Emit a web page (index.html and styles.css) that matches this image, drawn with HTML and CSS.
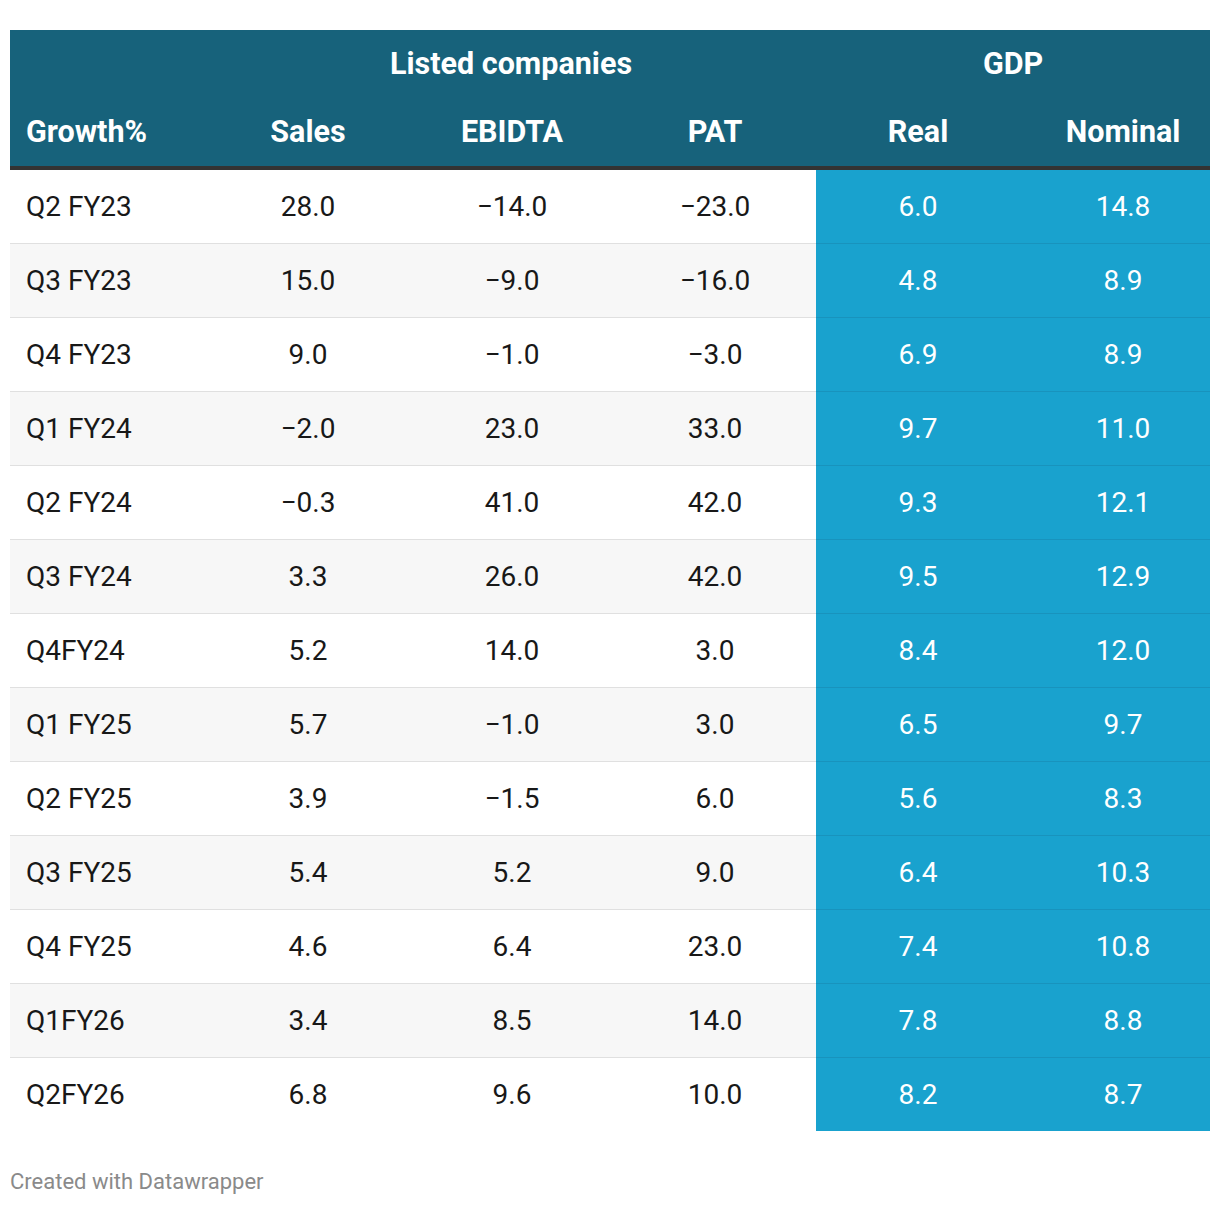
FILE: index.html
```html
<!DOCTYPE html>
<html>
<head>
<meta charset="utf-8">
<link rel="stylesheet" href="styles.css">
</head>
<body>
<div class="chart">
  <table class="dw-table">
    <colgroup>
      <col class="c1"><col class="c2"><col class="c3"><col class="c4"><col class="c5"><col class="c6">
    </colgroup>
    <thead>
      <tr class="group-row">
        <th></th>
        <th colspan="3" class="center">Listed companies</th>
        <th colspan="2" class="center">GDP</th>
      </tr>
      <tr class="head-row">
        <th class="left">Growth%</th>
        <th class="center">Sales</th>
        <th class="center">EBIDTA</th>
        <th class="center">PAT</th>
        <th class="center">Real</th>
        <th class="center last">Nominal</th>
      </tr>
    </thead>
    <tbody>
      <tr><td class="left">Q2 FY23</td><td>28.0</td><td>−14.0</td><td>−23.0</td><td class="hl">6.0</td><td class="hl last">14.8</td></tr>
      <tr><td class="left">Q3 FY23</td><td>15.0</td><td>−9.0</td><td>−16.0</td><td class="hl">4.8</td><td class="hl last">8.9</td></tr>
      <tr><td class="left">Q4 FY23</td><td>9.0</td><td>−1.0</td><td>−3.0</td><td class="hl">6.9</td><td class="hl last">8.9</td></tr>
      <tr><td class="left">Q1 FY24</td><td>−2.0</td><td>23.0</td><td>33.0</td><td class="hl">9.7</td><td class="hl last">11.0</td></tr>
      <tr><td class="left">Q2 FY24</td><td>−0.3</td><td>41.0</td><td>42.0</td><td class="hl">9.3</td><td class="hl last">12.1</td></tr>
      <tr><td class="left">Q3 FY24</td><td>3.3</td><td>26.0</td><td>42.0</td><td class="hl">9.5</td><td class="hl last">12.9</td></tr>
      <tr><td class="left">Q4FY24</td><td>5.2</td><td>14.0</td><td>3.0</td><td class="hl">8.4</td><td class="hl last">12.0</td></tr>
      <tr><td class="left">Q1 FY25</td><td>5.7</td><td>−1.0</td><td>3.0</td><td class="hl">6.5</td><td class="hl last">9.7</td></tr>
      <tr><td class="left">Q2 FY25</td><td>3.9</td><td>−1.5</td><td>6.0</td><td class="hl">5.6</td><td class="hl last">8.3</td></tr>
      <tr><td class="left">Q3 FY25</td><td>5.4</td><td>5.2</td><td>9.0</td><td class="hl">6.4</td><td class="hl last">10.3</td></tr>
      <tr><td class="left">Q4 FY25</td><td>4.6</td><td>6.4</td><td>23.0</td><td class="hl">7.4</td><td class="hl last">10.8</td></tr>
      <tr><td class="left">Q1FY26</td><td>3.4</td><td>8.5</td><td>14.0</td><td class="hl">7.8</td><td class="hl last">8.8</td></tr>
      <tr><td class="left">Q2FY26</td><td>6.8</td><td>9.6</td><td>10.0</td><td class="hl">8.2</td><td class="hl last">8.7</td></tr>
    </tbody>
  </table>
  <div class="footer">Created with Datawrapper</div>
</div>
</body>
</html>
```

FILE: styles.css
```css
html, body {
  margin: 0;
  padding: 0;
  background: #ffffff;
}
body {
  font-family: Roboto, "Liberation Sans", sans-serif;
  color: #181818;
}
.chart {
  padding: 30px 10px 0 10px;
}
.dw-table {
  width: 1200px;
  border-collapse: collapse;
  table-layout: fixed;
}
.c1 { width: 196px; }
.c2 { width: 204px; }
.c3 { width: 204px; }
.c4 { width: 202px; }
.c5 { width: 204px; }
.c6 { width: 190px; }

thead th {
  background: #17627b;
  color: #ffffff;
  font-weight: 700;
  font-size: 30.5px;
  padding: 0;
}
.group-row th {
  height: 67px;
  vertical-align: middle;
}
.head-row th {
  height: 69px;
  vertical-align: middle;
  border-bottom: 4px solid #333333;
}
th.left, td.left {
  text-align: left;
  padding-left: 16px;
}
.center { text-align: center; }
th.last, td.last { padding-left: 16px; }

tbody td {
  font-size: 28px;
  text-align: center;
  height: 73px;
  padding: 0;
  vertical-align: middle;
  border-bottom: 1px solid #e0e0e0;
}
tbody tr:nth-child(even) td {
  background: #f7f7f7;
}
tbody tr:last-child td {
  border-bottom: none;
}
tbody td.hl,
tbody tr:nth-child(even) td.hl {
  background: #19a2ce;
  color: #ffffff;
  border-bottom-color: #1893bd;
}
.footer {
  margin-top: 38px;
  font-size: 22px;
  color: #8a8a8a;
}
```
